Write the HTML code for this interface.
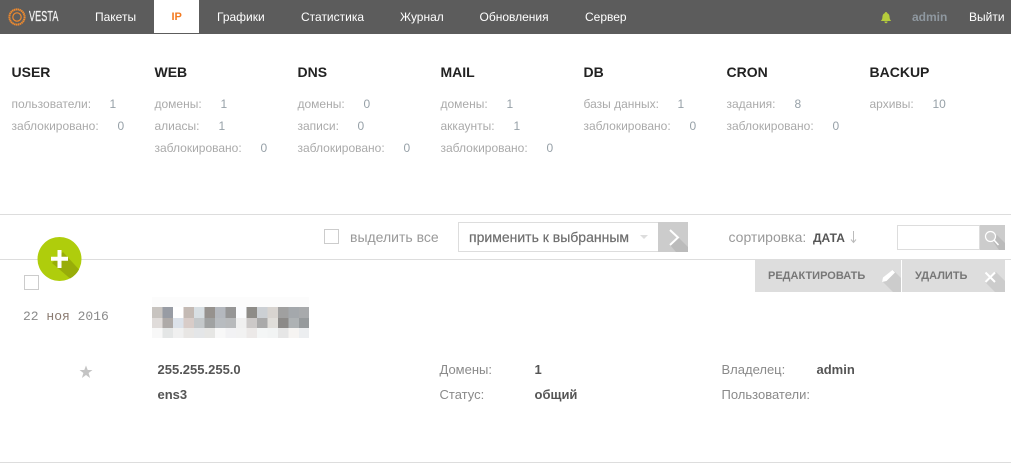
<!DOCTYPE html>
<html><head><meta charset="utf-8">
<style>
html,body{margin:0;padding:0;background:#fff}
#p{position:relative;width:1011px;height:466px;overflow:hidden;font-family:"Liberation Sans",sans-serif;font-size:12px;color:#999}
#p div,#p span.a{position:absolute;white-space:nowrap}
.n{color:#fff;top:9px;font-size:12px;line-height:16px}
.h{top:64px;font-size:14px;font-weight:bold;color:#222;line-height:16px;margin-left:.5px}
.s{font-size:12px;color:#aaa;line-height:16px;margin-left:.5px}
.v{font-size:12px;color:#97a1a8;line-height:16px;margin-left:.5px}
.l{font-size:13px;color:#8a8a8a;line-height:16px;margin-left:.5px}
.b{font-size:13px;color:#555;font-weight:bold;line-height:16px;margin-left:.5px}
</style></head><body>
<div id="p">
<div style="left:0;top:0;width:1011px;height:34px;background:#5c5c5c"></div>
<svg style="position:absolute;left:7px;top:7px" width="20" height="20" viewBox="0 0 20 20"><circle cx="10" cy="10" r="7.6" fill="none" stroke="#ef8a2e" stroke-width="2" stroke-dasharray="1.500 .4"/><circle cx="10" cy="10" r="4.200" fill="none" stroke="#ef8a2e" stroke-width="1.200"/></svg>
<div style="left:29px;top:8px;font-size:15px;line-height:18px;color:#f2f2f2;transform:scaleX(.6);transform-origin:0 0;letter-spacing:.2px;-webkit-text-stroke:.3px #f2f2f2">VESTA</div>
<div class="n" style="left:95px">Пакеты</div>
<div style="left:154px;top:0;width:45px;height:33px;background:#fff"></div>
<div class="n" style="left:171.500px;color:#f47a20;font-weight:bold;font-size:11px">IP</div>
<div class="n" style="left:217px">Графики</div>
<div class="n" style="left:301px">Статистика</div>
<div class="n" style="left:400px">Журнал</div>
<div class="n" style="left:479.500px">Обновления</div>
<div class="n" style="left:585px">Сервер</div>
<svg style="position:absolute;left:880px;top:12px" width="12" height="12" viewBox="0 0 12 12"><path d="M6 0C6.800 0 7.200.5 7.300 1.200 9 1.800 9.500 3.300 9.600 5.500c.1 1.600.7 2.500 1.600 3.500H.8C1.700 8 2.300 7.100 2.400 5.500 2.500 3.300 3 1.800 4.700 1.200 4.800.5 5.200 0 6 0zM4.400 9.500h3.200C7.500 10.600 6.900 11.200 6 11.200S4.500 10.600 4.400 9.500z" fill="#b5cc3c"/></svg>
<div class="n" style="left:912px;color:#8f98a0;font-weight:bold">admin</div>
<div class="n" style="left:969px">Выйти</div>

<div class="h" style="left:11px">USER</div>
<div class="h" style="left:154px">WEB</div>
<div class="h" style="left:297px">DNS</div>
<div class="h" style="left:440px">MAIL</div>
<div class="h" style="left:583px">DB</div>
<div class="h" style="left:726px">CRON</div>
<div class="h" style="left:869px">BACKUP</div>

<div class="s" style="left:11px;top:96px">пользователи:</div><div class="v" style="left:109px;top:96px">1</div>
<div class="s" style="left:11px;top:118px">заблокировано:</div><div class="v" style="left:117px;top:118px">0</div>
<div class="s" style="left:154px;top:96px">домены:</div><div class="v" style="left:220px;top:96px">1</div>
<div class="s" style="left:154px;top:118px">алиасы:</div><div class="v" style="left:218px;top:118px">1</div>
<div class="s" style="left:154px;top:140px">заблокировано:</div><div class="v" style="left:260px;top:140px">0</div>
<div class="s" style="left:297px;top:96px">домены:</div><div class="v" style="left:363px;top:96px">0</div>
<div class="s" style="left:297px;top:118px">записи:</div><div class="v" style="left:357px;top:118px">0</div>
<div class="s" style="left:297px;top:140px">заблокировано:</div><div class="v" style="left:403px;top:140px">0</div>
<div class="s" style="left:440px;top:96px">домены:</div><div class="v" style="left:506px;top:96px">1</div>
<div class="s" style="left:440px;top:118px">аккаунты:</div><div class="v" style="left:513px;top:118px">1</div>
<div class="s" style="left:440px;top:140px">заблокировано:</div><div class="v" style="left:546px;top:140px">0</div>
<div class="s" style="left:583px;top:96px">базы данных:</div><div class="v" style="left:677px;top:96px">1</div>
<div class="s" style="left:583px;top:118px">заблокировано:</div><div class="v" style="left:689px;top:118px">0</div>
<div class="s" style="left:726px;top:96px">задания:</div><div class="v" style="left:794px;top:96px">8</div>
<div class="s" style="left:726px;top:118px">заблокировано:</div><div class="v" style="left:832px;top:118px">0</div>
<div class="s" style="left:869px;top:96px">архивы:</div><div class="v" style="left:932px;top:96px">10</div>

<div style="left:0;top:214px;width:1011px;height:1px;background:#ddd"></div>
<div style="left:0;top:259px;width:1011px;height:1px;background:#ddd"></div>

<div style="left:324px;top:229px;width:13px;height:13px;border:1px solid #ccc;background:#fff"></div>
<div style="left:350px;top:229px;font-size:14px;line-height:16px;color:#999">выделить все</div>
<div style="left:458px;top:222px;width:200px;height:28px;border:1px solid #ddd;background:#fff"></div>
<div style="left:469px;top:229px;font-size:14px;line-height:16px;color:#6e6e6e;-webkit-text-stroke:.2px #6e6e6e">применить к выбранным</div>
<div style="left:640px;top:235px;width:0;height:0;border-left:4px solid transparent;border-right:4px solid transparent;border-top:4px solid #ddd"></div>
<svg style="position:absolute;left:658px;top:222px" width="30" height="30" viewBox="0 0 30 30"><rect width="30" height="30" fill="#ccc"/><path d="M20 15L30 25V30H18L12 23z" fill="#bbb"/><path d="M12 8L20 15.500 12 23" fill="none" stroke="#fff" stroke-width="2"/></svg>

<div style="left:728.500px;top:229px;font-size:14px;line-height:16px;color:#999">сортировка:</div>
<div style="left:813px;top:230px;font-size:12px;font-weight:bold;line-height:16px;color:#555">ДАТА</div>
<svg style="position:absolute;left:849px;top:230px" width="9" height="14" viewBox="0 0 9 14"><path d="M4.500 1V12M2 9.500L4.500 12.500 7 9.500" fill="none" stroke="#bbb" stroke-width="1"/></svg>
<div style="left:897px;top:225px;width:81px;height:23px;border:1px solid #ddd;background:#fff"></div>
<svg style="position:absolute;left:980px;top:225px" width="25" height="25" viewBox="0 0 25 25"><rect width="25" height="25" fill="#ccc"/><path d="M12 15L17 10 25 18V25H19z" fill="#bbb"/><circle cx="10.500" cy="11.500" r="5" fill="#ccc" stroke="#fff" stroke-width="1.200"/><path d="M14 15L18.500 20" stroke="#fff" stroke-width="1.500"/></svg>

<svg style="position:absolute;left:37px;top:237px" width="45" height="45" viewBox="0 0 45 45"><circle cx="22.500" cy="22" r="22" fill="#afcd0c"/><path d="M15 26L26 15 42 32.500A22 22 0 0 1 33 41.500z" fill="#98ad09"/><path d="M20.500 13h4v6.800H31v4h-6.500V31h-4v-7.200H14v-4h6.500z" fill="#fff"/></svg>

<div style="left:24px;top:275px;width:13px;height:13px;border:1px solid #ccc;background:#fff"></div>
<div style="left:23px;top:310px;font-family:'Liberation Mono',monospace;font-size:13px;line-height:14px;color:#8a8a8a">22 <span style="color:#8a7a70">ноя</span> 2016</div>

<svg style="position:absolute;left:152px;top:297px" width="157" height="41" viewBox="0 0 157 41" shape-rendering="crispEdges">
<rect width="157" height="10" fill="#fcfcfc"/>
<g>
<rect x="0" y="10" width="11" height="11" fill="#c8c4c0"/><rect x="10.500" y="10" width="11" height="11" fill="#989ca4"/><rect x="21" y="10" width="11" height="11" fill="#fff"/><rect x="31.500" y="10" width="11" height="11" fill="#c4bab4"/><rect x="42" y="10" width="11" height="11" fill="#d8dfe3"/><rect x="52.500" y="10" width="11" height="11" fill="#96928e"/><rect x="63" y="10" width="11" height="11" fill="#b4b8be"/><rect x="73.500" y="10" width="11" height="11" fill="#969696"/><rect x="84" y="10" width="11" height="11" fill="#fbfcfe"/><rect x="94.500" y="10" width="11" height="11" fill="#8e8c88"/><rect x="105" y="10" width="11" height="11" fill="#ccd0d4"/><rect x="115.500" y="10" width="11" height="11" fill="#d8d4d0"/><rect x="126" y="10" width="11" height="11" fill="#a0a0a0"/><rect x="136.500" y="10" width="11" height="11" fill="#a4a8ac"/><rect x="147" y="10" width="10" height="11" fill="#a8aaac"/>
</g>
<g>
<rect x="0" y="21" width="11" height="10" fill="#e0dcda"/><rect x="10.500" y="21" width="11" height="10" fill="#aeaaa8"/><rect x="21" y="21" width="11" height="10" fill="#dce2ea"/><rect x="31.500" y="21" width="11" height="10" fill="#d8ccc8"/><rect x="42" y="21" width="11" height="10" fill="#c4c8ca"/><rect x="52.500" y="21" width="11" height="10" fill="#a0a2a2"/><rect x="63" y="21" width="11" height="10" fill="#b8bcc0"/><rect x="73.500" y="21" width="11" height="10" fill="#b8babc"/><rect x="84" y="21" width="11" height="10" fill="#f0f0f0"/><rect x="94.500" y="21" width="11" height="10" fill="#ccc9c8"/><rect x="105" y="21" width="11" height="10" fill="#aaaaaa"/><rect x="115.500" y="21" width="11" height="10" fill="#e0deda"/><rect x="126" y="21" width="11" height="10" fill="#8c8a88"/><rect x="136.500" y="21" width="11" height="10" fill="#aeb2b4"/><rect x="147" y="21" width="10" height="10" fill="#969a9c"/>
</g>
<g>
<rect x="0" y="31" width="11" height="10" fill="#f8f8f8"/><rect x="10.500" y="31" width="11" height="10" fill="#e4e6e6"/><rect x="21" y="31" width="11" height="10" fill="#f0f0f0"/><rect x="31.500" y="31" width="11" height="10" fill="#e8e6e4"/><rect x="42" y="31" width="11" height="10" fill="#e4e6e8"/><rect x="52.500" y="31" width="11" height="10" fill="#e6e6e4"/><rect x="63" y="31" width="11" height="10" fill="#f8f8f8"/><rect x="73.500" y="31" width="11" height="10" fill="#f2f2f4"/><rect x="84" y="31" width="11" height="10" fill="#f2f2f2"/><rect x="94.500" y="31" width="11" height="10" fill="#ece9e8"/><rect x="105" y="31" width="11" height="10" fill="#f4f6f6"/><rect x="115.500" y="31" width="11" height="10" fill="#f2f4f4"/><rect x="126" y="31" width="11" height="10" fill="#e6e6e6"/><rect x="136.500" y="31" width="11" height="10" fill="#f6f4f2"/><rect x="147" y="31" width="10" height="10" fill="#eceef0"/>
</g>
</svg>

<div style="left:755px;top:260px;width:146px;height:32px;background:#ddd"></div>
<div style="left:902px;top:260px;width:103px;height:32px;background:#ddd"></div>
<div style="left:768px;top:268px;font-size:11px;font-weight:bold;line-height:16px;color:#777">РЕДАКТИРОВАТЬ</div>
<div style="left:915px;top:268px;font-size:11px;font-weight:bold;line-height:16px;color:#777">УДАЛИТЬ</div>
<svg style="position:absolute;left:875px;top:260px" width="26" height="32" viewBox="0 0 26 32"><path d="M7 21L18 10 26 18V32H18z" fill="#ccc"/><path d="M17.500 10L20 12.500 11.500 21 7 22 8 17.500z" fill="#fff"/></svg>
<svg style="position:absolute;left:979px;top:260px" width="26" height="32" viewBox="0 0 26 32"><path d="M6 22L17 12 26 21V32H16z" fill="#ccc"/><path d="M6.500 12.500L16 22M16 12.500L6.500 22" stroke="#fff" stroke-width="2"/></svg>

<svg style="position:absolute;left:79px;top:365px" width="14" height="14" viewBox="0 0 14 14"><path d="M7 .5L8.700 5H13.500L9.600 8 11.100 13 7 10 2.900 13 4.400 8 .5 5H5.300z" fill="#c4c4c4"/></svg>

<div class="b" style="left:157px;top:362px">255.255.255.0</div>
<div class="b" style="left:157px;top:387px">ens3</div>
<div class="l" style="left:439px;top:362px">Домены:</div>
<div class="b" style="left:534px;top:362px">1</div>
<div class="l" style="left:439px;top:387px">Статус:</div>
<div class="b" style="left:534px;top:387px">общий</div>
<div class="l" style="left:721px;top:362px">Владелец:</div>
<div class="b" style="left:816px;top:362px">admin</div>
<div class="l" style="left:721px;top:387px">Пользователи:</div>

<div style="left:0;top:462px;width:1011px;height:1px;background:#ddd"></div>
</div>
</body></html>
